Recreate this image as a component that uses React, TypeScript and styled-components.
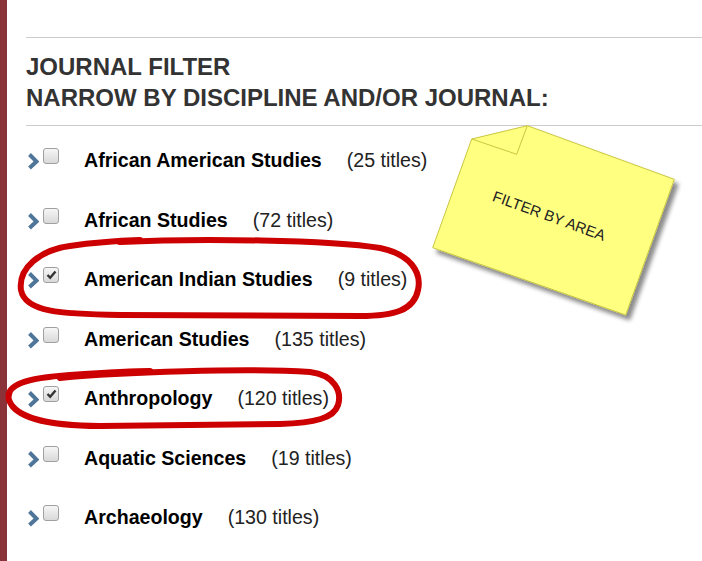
import React from 'react';
import styled, {createGlobalStyle} from 'styled-components';

const GlobalStyle = createGlobalStyle`
  html, body {
    margin: 0;
    padding: 0;
    background: #ffffff;
  }
  body {
    font-family: "Liberation Sans", Arial, sans-serif;
  }
`;

const Page = styled.div`
  position: relative;
  display: flex;
  flex-direction: row;
  width: 702px;
  height: 561px;
  overflow: hidden;
  background: #ffffff;
`;

const SideBar = styled.div`
  width: 7px;
  flex-shrink: 0;
  background: #8a3439;
`;

const Main = styled.div`
  flex-grow: 1;
  padding-left: 19px;
`;

const Rule = styled.div<{$top: number; $bottom: number}>`
  height: 1px;
  background: #cccccc;
  margin-top: ${p => p.$top}px;
  margin-bottom: ${p => p.$bottom}px;
`;

const Heading = styled.h2`
  margin: 0;
  font-size: 24px;
  line-height: 31px;
  font-weight: bold;
  color: #333333;
`;

const List = styled.div`
  display: flex;
  flex-direction: column;
`;

const Row = styled.div`
  display: flex;
  flex-direction: row;
  align-items: flex-start;
  height: 59.5px;
`;

const Chevron = styled.svg`
  width: 12px;
  height: 18px;
  margin-left: 1px;
  margin-top: 3px;
  flex-shrink: 0;
`;

const CheckBox = styled.div<{$checked: boolean}>`
  width: 14px;
  height: 14px;
  margin-left: 4px;
  margin-top: -1px;
  border: 1px solid #a0a0a0;
  border-radius: 3px;
  background: linear-gradient(#f6f6f6, #d9d9d9);
  display: flex;
  align-items: center;
  justify-content: center;
  flex-shrink: 0;
`;

const Label = styled.span`
  margin-left: 25px;
  font-size: 19.6px;
  line-height: 22px;
  font-weight: bold;
  color: #000000;
  white-space: nowrap;
`;

const Count = styled.span`
  margin-left: 25px;
  font-size: 19.6px;
  line-height: 22px;
  color: #222222;
  white-space: nowrap;
`;

const Overlay = styled.svg`
  position: absolute;
  left: 0;
  top: 0;
  width: 702px;
  height: 561px;
  pointer-events: none;
`;

type Discipline = {name: string; titles: number; checked: boolean};

const disciplines: Discipline[] = [
  {name: 'African American Studies', titles: 25, checked: false},
  {name: 'African Studies', titles: 72, checked: false},
  {name: 'American Indian Studies', titles: 9, checked: true},
  {name: 'American Studies', titles: 135, checked: false},
  {name: 'Anthropology', titles: 120, checked: true},
  {name: 'Aquatic Sciences', titles: 19, checked: false},
  {name: 'Archaeology', titles: 130, checked: false},
];

const DisciplineRow: React.FC<{item: Discipline}> = ({item}) => {
  return (
    <Row>
      <Chevron viewBox="0 0 12 18">
        <polyline points="2.5,2.5 9.5,9.5 2.5,16" fill="none" stroke="#4f7599" strokeWidth="4" strokeLinejoin="miter" />
      </Chevron>
      <CheckBox $checked={item.checked}>
        {item.checked && (
          <svg width="11" height="10" viewBox="0 0 11 10">
            <polyline points="1.5,5 4.2,7.8 9.5,1.5" fill="none" stroke="#333" strokeWidth="2.4" />
          </svg>
        )}
      </CheckBox>
      <Label>{item.name}</Label>
      <Count>({item.titles} titles)</Count>
    </Row>
  );
};

const Annotations: React.FC = () => {
  return (
    <Overlay viewBox="0 0 702 561">
      <defs>
        <filter id="noteShadow" x="-20%" y="-20%" width="150%" height="150%">
          <feDropShadow dx="4" dy="5" stdDeviation="2" floodColor="#000" floodOpacity="0.45" />
        </filter>
      </defs>
      <g filter="url(#noteShadow)">
        <polygon
          points="471.7,139 527.3,125.7 674.3,179.3 625.7,315 432.7,247.7"
          fill="#ffff80"
          stroke="#c9c640"
          strokeWidth="1"
        />
      </g>
      <polyline points="471.7,139 516.7,154.3 527.3,125.7" fill="none" stroke="#c9c640" strokeWidth="1" />
      <text
        x="549"
        y="221"
        textAnchor="middle"
        fontFamily="Liberation Sans, Arial, sans-serif"
        fontSize="15"
        fill="#222"
        transform="rotate(20 549 216)"
      >
        FILTER BY AREA
      </text>
      <path
        d="M 120 242 C 200 238, 330 240, 380 248 C 410 254, 422 272, 418 290 C 414 310, 395 316, 360 316 L 120 315 C 60 314, 25 312, 21 290 C 18 268, 40 250, 70 246 C 90 243, 110 241, 140 240"
        fill="none"
        stroke="#cc0000"
        strokeWidth="6"
        strokeLinecap="round"
        strokeLinejoin="round"
      />
      <path
        d="M 60 378 C 120 372, 250 368, 310 372 C 335 375, 342 392, 338 405 C 334 418, 315 423, 280 424 L 100 426 C 50 426, 15 418, 9 400 C 5 385, 25 378, 70 375 C 100 373, 130 371, 150 371"
        fill="none"
        stroke="#cc0000"
        strokeWidth="6"
        strokeLinecap="round"
        strokeLinejoin="round"
      />
    </Overlay>
  );
};

export default function App() {
  return (
    <>
      <GlobalStyle />
      <Page>
        <SideBar />
        <Main>
          <Rule $top={37} $bottom={13} />
          <Heading>
            JOURNAL FILTER
            <br />
            NARROW BY DISCIPLINE AND/OR JOURNAL:
          </Heading>
          <Rule $top={12} $bottom={23} />
          <List>
            {disciplines.map(item => (
              <DisciplineRow key={item.name} item={item} />
            ))}
          </List>
        </Main>
        <Annotations />
      </Page>
    </>
  );
}
